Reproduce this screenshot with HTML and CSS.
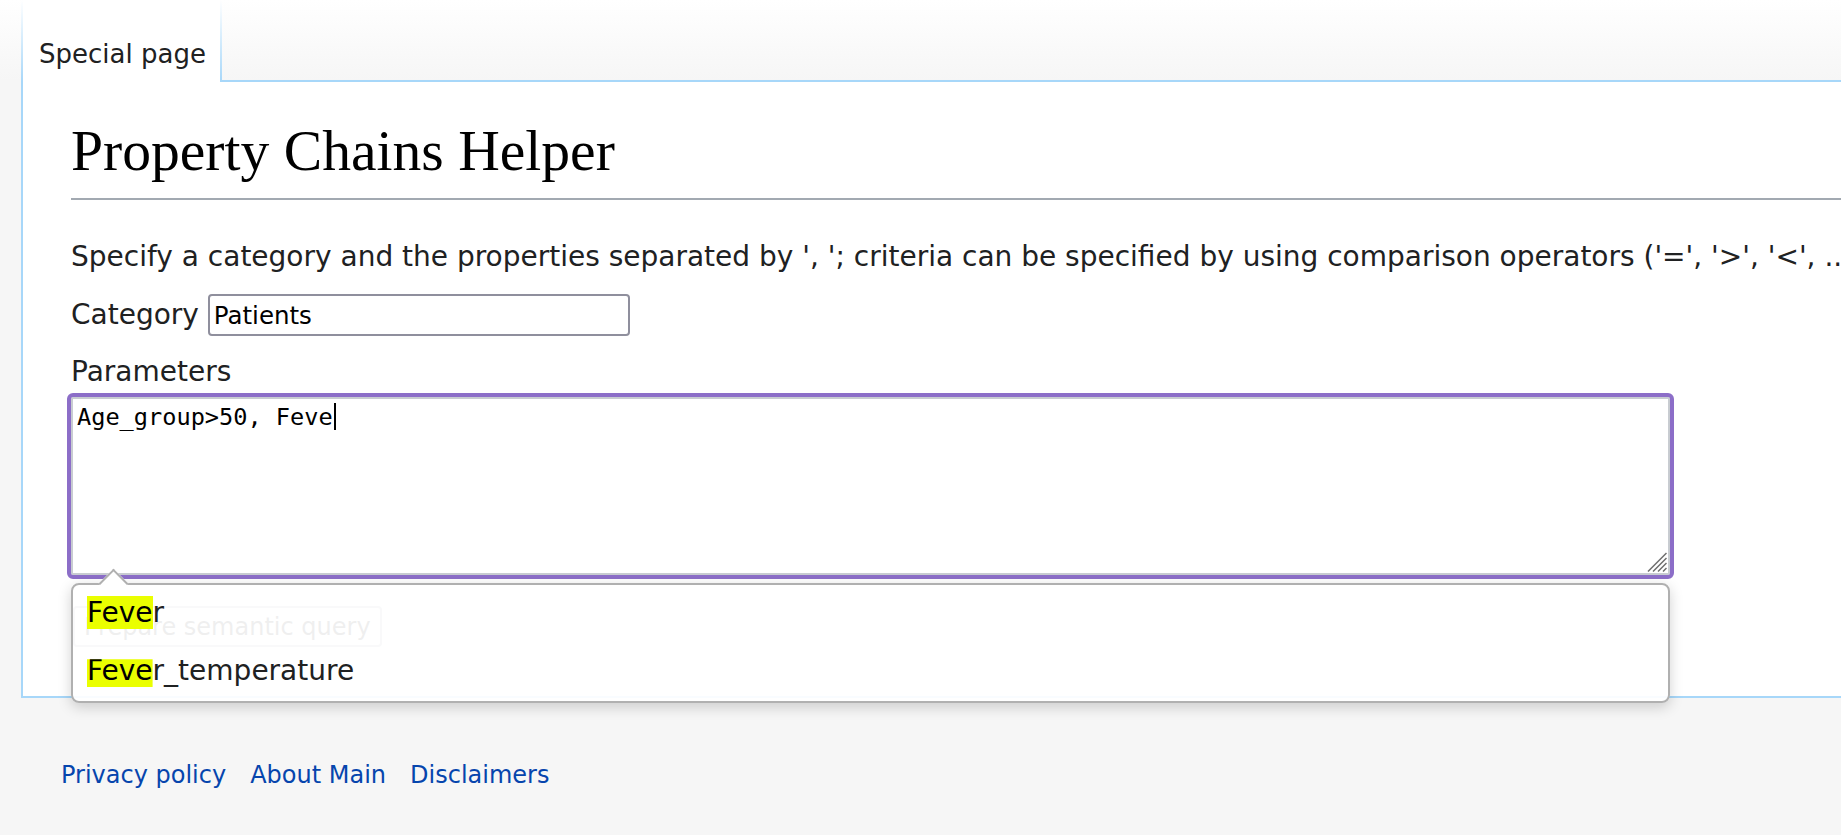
FILE: index.html
```html
<!DOCTYPE html>
<html lang="en">
<head>
<meta charset="utf-8">
<title>Property Chains Helper</title>
<link rel="stylesheet" href="styles.css">
</head>
<body>
<div class="page">
  <div class="head">
    <div class="tab">Special page</div>
    <div class="head-fill"></div>
  </div>
  <main class="content">
    <h1 class="title">Property Chains Helper</h1>
    <p class="intro">Specify a category and the properties separated by ', '; criteria can be specified by using comparison operators ('=', '&gt;', '&lt;', ...) and values.</p>
    <div class="field-row"><label class="field-label" for="cat">Category</label> <input id="cat" class="cat-input" type="text" value="Patients"></div>
    <div class="label-row">Parameters</div>
    <div class="params">
      <div class="textarea" role="textbox">Age_group&gt;50, Feve<span class="caret"></span><svg class="grip" width="20" height="20" viewBox="0 0 20 20"><path d="M19.5 1 L1 19.5 M19.5 6 L6 19.5 M19.5 11 L11 19.5 M19.5 16 L16 19.5" stroke="#6e6e6e" stroke-width="1.5" fill="none"/></svg></div>
      <div class="suggest">
        <span class="suggest-arrow"></span>
        <div class="suggest-item"><mark class="hl">Feve</mark>r</div>
        <div class="suggest-item second"><mark class="hl">Feve</mark>r_temperature</div>
      </div>
    </div>
    <button class="btn" type="button">Prepare semantic query</button>
  </main>
  <footer class="footer">
    <ul class="footer-links">
      <li><a href="#">Privacy policy</a></li>
      <li><a href="#">About Main</a></li>
      <li><a href="#">Disclaimers</a></li>
    </ul>
  </footer>
</div>
</body>
</html>
```

FILE: styles.css
```css
html, body {
  margin: 0;
  padding: 0;
  overflow: hidden;
}
body {
  background: linear-gradient(to bottom, #ffffff 0, #f6f6f6 80px) no-repeat, #f6f6f6;
  font-family: "DejaVu Sans", sans-serif;
  color: #202122;
  min-height: 835px;
}
.page {
  margin-left: 21px;
}
.head {
  display: flex;
  height: 82px;
}
.tab {
  box-sizing: border-box;
  height: 82px;
  padding: 39px 16px 13px 18px;
  font-size: 26px;
  line-height: 30px;
  color: #202122;
  background:
    linear-gradient(to bottom, rgba(167,215,249,0) 0, #a7d7f9 100%) left top / 2px 100% no-repeat,
    linear-gradient(to bottom, rgba(167,215,249,0) 0, #a7d7f9 100%) right top / 2px 100% no-repeat,
    #ffffff;
}
.head-fill {
  flex: 1;
  height: 80px;
  border-bottom: 2px solid #a7d7f9;
}
.content {
  display: block;
  background: #ffffff;
  border-left: 2px solid #a7d7f9;
  border-bottom: 2px solid #a7d7f9;
  padding: 32px 0 49px 48px;
}
.title {
  margin: 0;
  padding: 0 0 9px 0;
  font-family: "Liberation Serif", "Times New Roman", serif;
  font-weight: normal;
  font-size: 57.6px;
  line-height: 74.88px;
  color: #000000;
  border-bottom: 2px solid #a2a9b1;
}
.intro {
  margin: 35px 0 0 0;
  font-size: 28px;
  line-height: 44.8px;
  white-space: nowrap;
  overflow: hidden;
}
.field-row {
  margin-top: 13px;
  font-size: 28px;
  line-height: 44.8px;
}
.cat-input {
  box-sizing: border-box;
  width: 422px;
  height: 42px;
  margin: 0;
  padding: 0 4px;
  border: 2px solid #8f8f9d;
  border-radius: 4px;
  font-family: "DejaVu Sans", sans-serif;
  font-size: 24.5px;
  color: #000000;
  background: #ffffff;
  vertical-align: baseline;
}
.label-row {
  margin-top: 13px;
  font-size: 28px;
  line-height: 44.8px;
}
.params {
  position: relative;
  margin-top: 2px;
}
.textarea {
  position: relative;
  box-sizing: border-box;
  width: 1599px;
  height: 178px;
  padding: 4px;
  border: 2px solid #c8ccd1;
  border-radius: 2px;
  outline: 4px solid #8c6ec8;
  font-family: "DejaVu Sans Mono", monospace;
  font-size: 23.6px;
  color: #000000;
  white-space: pre;
  background: #ffffff;
}
.caret {
  display: inline-block;
  width: 2px;
  height: 27px;
  margin-left: 1px;
  background: #000000;
  vertical-align: top;
}
.grip {
  position: absolute;
  right: 1px;
  bottom: 1px;
}
.suggest {
  position: absolute;
  z-index: 2;
  top: calc(100% + 8px);
  left: 0;
  box-sizing: border-box;
  width: 1599px;
  height: 120px;
  border: 2px solid #b0b0b0;
  border-radius: 8px;
  background: rgba(255,255,255,0.93);
  box-shadow: 0 4px 14px rgba(0,0,0,0.18);
  font-size: 28px;
  color: #202122;
}
.suggest-arrow {
  position: absolute;
  left: 30px;
  top: -12px;
  width: 21px;
  height: 21px;
  box-sizing: border-box;
  background: #ffffff;
  border-top: 2px solid #b0b0b0;
  border-left: 2px solid #b0b0b0;
  transform: rotate(45deg);
}
.suggest-item {
  position: relative;
  height: 58px;
  box-sizing: border-box;
  padding: 11px 14px 0 14px;
  line-height: 33px;
  white-space: nowrap;
}
.hl {
  display: inline-block;
  background: #eaff00;
  color: #000000;
  line-height: 33px;
}
.second .hl {
  clip-path: inset(5px 0 0 0);
}
.btn {
  display: block;
  box-sizing: border-box;
  height: 41px;
  margin: 31px 0 0 2px;
  padding: 0 9px;
  border: 2px solid #a2a9b1;
  border-radius: 4px;
  background: #f8f9fa;
  font-family: "DejaVu Sans", sans-serif;
  font-size: 24px;
  color: #202122;
}
.footer {
  padding: 61px 0 40px 40px;
}
.footer-links {
  margin: 0;
  padding: 0;
  list-style: none;
  display: flex;
  gap: 24px;
  font-size: 24px;
  line-height: 33.6px;
}
.footer-links a {
  color: #0645ad;
  text-decoration: none;
}
```
